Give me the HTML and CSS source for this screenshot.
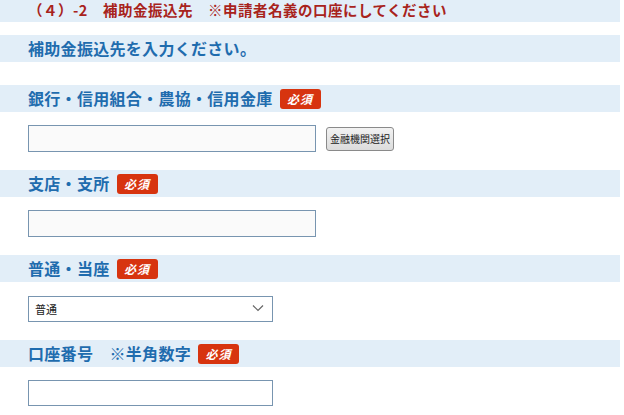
FILE: index.html
```html
<!DOCTYPE html>
<html lang="ja">
<head>
  <meta charset="UTF-8">
  <meta name="viewport" content="width=device-width, initial-scale=1.0">
  <title>補助金振込先</title>
  <link rel="stylesheet" href="styles.css">
</head>

<body>

<div class="form">
  <div class="section-title">（４）-2　補助金振込先　※申請者名義の口座にしてください</div>

  <div class="band lead">補助金振込先を入力ください。</div>

  <div class="field">
    <div class="band">銀行・信用組合・農協・信用金庫<span class="req">必須</span></div>
    <div class="control">
      <input type="text" class="text wide">
      <button type="button" class="btn-pick">金融機関選択</button>
    </div>
  </div>

  <div class="field">
    <div class="band">支店・支所<span class="req">必須</span></div>
    <div class="control">
      <input type="text" class="text wide">
    </div>
  </div>

  <div class="field">
    <div class="band">普通・当座<span class="req">必須</span></div>
    <div class="control">
      <div class="select-wrap">
        <select class="select">
          <option>普通</option>
          <option>当座</option>
        </select>
        <svg class="chevron" width="12" height="8" viewBox="0 0 12 8">
          <polyline points="1,1.5 6,6.5 11,1.5" fill="none" stroke="#666" stroke-width="1.2"/>
        </svg>
      </div>
    </div>
  </div>

  <div class="field">
    <div class="band">口座番号　※半角数字<span class="req">必須</span></div>
    <div class="control">
      <input type="text" class="text narrow">
    </div>
  </div>
</div>

</body>
</html>
```

FILE: styles.css
```css
body {
  font-family: "Noto Sans CJK JP", "Noto Sans", sans-serif;
  background: #fff;
  margin: 0;
  color: #333;
}
.form {
  width: 620px;
}
.section-title {
  background: #e2eef8;
  color: #a8231c;
  font-size: 14.5px;
  font-weight: 700;
  letter-spacing: 0.5px;
  height: 22px;
  line-height: 20px;
  padding-left: 28px;
  margin-bottom: 13px;
}
.band {
  background: #e2eef8;
  color: #1f6cae;
  font-size: 16px;
  font-weight: 700;
  letter-spacing: 0.3px;
  height: 27px;
  line-height: 27px;
  padding-left: 28px;
  display: flex;
  align-items: center;
}
.band.lead {
  margin-bottom: 23px;
}
.field {
  margin-bottom: 18px;
}
.req {
  display: inline-block;
  background: #d7340f;
  color: #fff;
  font-size: 12px;
  font-weight: 700;
  font-style: italic;
  width: 41px;
  height: 20px;
  line-height: 20px;
  text-align: center;
  border-radius: 3px;
  margin-left: 7px;
  letter-spacing: 1px;
}
.control {
  display: flex;
  align-items: center;
  padding-left: 28px;
  margin-top: 13px;
}
.text {
  box-sizing: border-box;
  height: 27px;
  border: 1px solid #7895b0;
  background: #fafafa;
  margin: 0;
  padding: 0 6px;
}
.text.wide {
  width: 288px;
}
.text.narrow {
  width: 245px;
  height: 26px;
  background: #fff;
}
.btn-pick {
  margin-left: 10px;
  height: 24px;
  width: 68px;
  padding: 0;
  font-family: "Noto Sans CJK JP", sans-serif;
  font-size: 10px;
  color: #222;
  background: linear-gradient(#f2f2f2, #dcdcdc);
  border: 1px solid #8a8a8a;
  border-radius: 3px;
}
.select-wrap {
  position: relative;
  width: 245px;
}
.select {
  -webkit-appearance: none;
  appearance: none;
  box-sizing: border-box;
  width: 245px;
  height: 26px;
  border: 1px solid #7895b0;
  background: #fff;
  font-family: "Noto Sans CJK JP", sans-serif;
  font-size: 11px;
  color: #222;
  padding: 0 6px;
  margin: 0;
}
.chevron {
  position: absolute;
  right: 9px;
  top: 9px;
  pointer-events: none;
}
```
